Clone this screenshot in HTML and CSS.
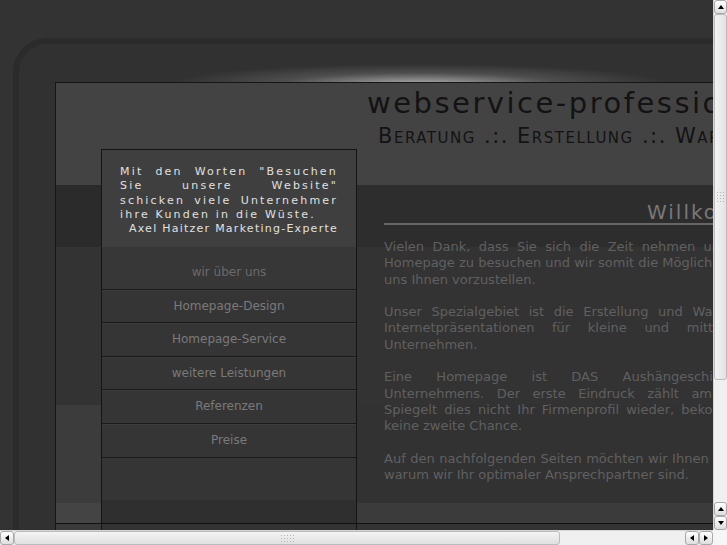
FILE: index.html
```html
<!DOCTYPE html>
<html>

<head>
    <meta charset="UTF-8">
    <link rel="stylesheet" href="styles.css">
    <title>webservice-professionell</title>
</head>

<body>
    <div class="page">
        <div class="frame">
            <div class="box">
                <div class="header">
                    <div class="logo">webservice-professionell</div>
                    <div class="slogan">Beratung .:. Erstellung .:. Wartung</div>
                </div>
                <div class="main">
                    <div class="sidebar">
                        <div class="quote">
                            <p>Mit den Worten "Besuchen Sie unsere Website" schicken viele Unternehmer ihre Kunden in die Wüste.</p>
                            <div class="author">Axel Haitzer Marketing-Experte</div>
                        </div>
                        <ul class="menu">
                            <li class="active"><a href="#">wir über uns</a></li>
                            <li><a href="#">Homepage-Design</a></li>
                            <li><a href="#">Homepage-Service</a></li>
                            <li><a href="#">weitere Leistungen</a></li>
                            <li><a href="#">Referenzen</a></li>
                            <li><a href="#">Preise</a></li>
                        </ul>
                    </div>
                    <div class="content">
                        <h1>Willkommen</h1>
                        <p>Vielen Dank, dass Sie sich die Zeit nehmen und unsere Homepage zu besuchen und wir somit die Möglichkeit haben uns Ihnen vorzustellen.</p>
                        <p>Unser Spezialgebiet ist die Erstellung und Wartung von Internetpräsentationen für kleine und mittelständige Unternehmen.</p>
                        <p>Eine Homepage ist DAS Aushängeschild Ihres Unternehmens. Der erste Eindruck zählt am meisten. Spiegelt dies nicht Ihr Firmenprofil wieder, bekommen Sie keine zweite Chance.</p>
                        <p>Auf den nachfolgenden Seiten möchten wir Ihnen aufzeigen, warum wir Ihr optimaler Ansprechpartner sind.</p>
                    </div>
                </div>
                <div class="footer">
                    <div class="footer-side"></div>
                </div>
            </div>
        </div>
    </div>

    <!-- old browser scrollbars -->
    <div class="vscroll">
        <div class="sb-btn up"></div>
        <div class="sb-thumb v"><span class="grip"></span></div>
        <div class="sb-track"></div>
        <div class="sb-btn up"></div>
        <div class="sb-btn down"></div>
    </div>
    <div class="hscroll">
        <div class="sb-btn left"></div>
        <div class="sb-thumb h"><span class="grip"></span></div>
        <div class="sb-track"></div>
        <div class="sb-btn left"></div>
        <div class="sb-btn right"></div>
    </div>
    <div class="sb-corner"></div>
</body>

</html>
```

FILE: styles.css
```css
html,
body {
    margin: 0;
    height: 100%;
    overflow: hidden;
}

body {
    background-color: #333333;
    font-family: "DejaVu Sans", Verdana, sans-serif;
}

.page {
    width: 880px;
    padding: 38px 0 0 13px;
}

.frame {
    border: 6px solid #2b2b2b;
    border-right: none;
    border-radius: 34px 0 0 0;
    padding: 38px 0 0 36px;
    background-color: #313131;
    background-image: radial-gradient(ellipse 250px 20px at 400px 40px, rgba(255, 255, 255, 0.6), rgba(255, 255, 255, 0.14) 55%, rgba(255, 255, 255, 0) 100%);
    background-repeat: no-repeat;
}

.box {
    border-top: 1px solid #161616;
    border-left: 1px solid #161616;
}

.header {
    height: 102px;
    box-sizing: border-box;
    padding: 4px 0 0 311px;
    background-color: #434343;
    color: #131313;
}

.logo {
    font-size: 29px;
    letter-spacing: 2.5px;
    line-height: 32px;
}

.slogan {
    margin-top: 4px;
    padding-left: 11px;
    font-size: 21px;
    font-variant: small-caps;
    letter-spacing: 1.5px;
    line-height: 26px;
}

.main {
    display: flex;
    height: 338px;
    padding-left: 45px;
    background:
        linear-gradient(to bottom, #2b2b2b 0 62px, #333333 62px 220px, #3c3c3c 220px 318px, #444444 318px) 0 0 / 45px 100% no-repeat,
        linear-gradient(to bottom, #2d2d2d 0 62px, #333333 62px 220px, #323232 220px 318px, #3b3b3b 318px);
}

.sidebar {
    width: 254px;
    margin-top: -36px;
    border: 1px solid #151515;
    border-bottom: none;
    background: linear-gradient(to bottom, #353535 0 350px, #2f2f2f 350px);
}

.quote {
    height: 96px;
    box-sizing: border-box;
    padding: 15px 18px 0 18px;
    background-color: #3f3f3f;
    color: #e0e0e0;
    font-size: 11px;
    line-height: 14.3px;
}

.quote p {
    margin: 0;
    text-align: justify;
    letter-spacing: 2.2px;
}

.author {
    text-align: right;
    letter-spacing: 1.25px;
}

.menu {
    list-style: none;
    margin: 0;
    padding: 0;
}

.menu li {
    height: 32.6px;
    border-bottom: 1px solid #1a1a1a;
    box-shadow: inset 0 1px 0 rgba(255, 255, 255, 0.04);
    text-align: center;
    line-height: 33px;
    font-size: 12px;
}

.menu li.active {
    padding-top: 10px;
    background-color: #373737;
}

.menu a {
    color: #7a7a7a;
    text-decoration: none;
}

.menu li.active a {
    color: #6a6a6a;
}

.content {
    width: 397px;
    margin-left: 27px;
    color: #606060;
}

.content h1 {
    margin: 16px -9px 14px 0;
    font-size: 20px;
    font-weight: normal;
    letter-spacing: 2px;
    line-height: 22px;
    text-align: right;
    color: #787878;
    border-bottom: 2px solid #666666;
}

.content p {
    margin: 0 0 16.3px;
    font-size: 13px;
    line-height: 16.3px;
    text-align: justify;
}

.footer {
    height: 40px;
    border-top: 1px solid #111111;
    padding-left: 45px;
    background: linear-gradient(to right, #3a3a3a 0 45px, #333333 45px);
}

.footer-side {
    width: 254px;
    height: 100%;
    border-left: 1px solid #151515;
    border-right: 1px solid #151515;
}

/* scrollbars */

.vscroll {
    position: fixed;
    top: 0;
    right: 0;
    width: 14px;
    height: 530px;
    display: flex;
    flex-direction: column;
    background-color: #f0f0f0;
    border-left: 1px solid #d4d4d4;
    box-sizing: border-box;
}

.hscroll {
    position: fixed;
    left: 0;
    bottom: 0;
    width: 713px;
    height: 15px;
    display: flex;
    background-color: #f0f0f0;
    border-top: 1px solid #d4d4d4;
    box-sizing: border-box;
}

.sb-corner {
    position: fixed;
    right: 0;
    bottom: 0;
    width: 14px;
    height: 15px;
    background-color: #f6f6f6;
}

.sb-track {
    flex: 1;
}

.sb-btn {
    flex: none;
    position: relative;
    box-sizing: border-box;
    border: 1px solid #a9a9a9;
    border-radius: 3px;
    background: linear-gradient(to bottom, #ffffff, #dedede);
}

.vscroll .sb-btn {
    height: 14px;
}

.hscroll .sb-btn {
    width: 14px;
}

.sb-btn::after {
    content: "";
    position: absolute;
    left: 50%;
    top: 50%;
    width: 0;
    height: 0;
    border: 3px solid transparent;
}

.sb-btn.up::after {
    border-bottom: 4px solid #000000;
    border-top: none;
    margin: -2px 0 0 -3px;
}

.sb-btn.down::after {
    border-top: 4px solid #000000;
    border-bottom: none;
    margin: -2px 0 0 -3px;
}

.sb-btn.left::after {
    border-right: 4px solid #000000;
    border-left: none;
    margin: -3px 0 0 -2px;
}

.sb-btn.right::after {
    border-left: 4px solid #000000;
    border-right: none;
    margin: -3px 0 0 -2px;
}

.sb-thumb {
    flex: none;
    display: flex;
    align-items: center;
    justify-content: center;
    box-sizing: border-box;
    border: 1px solid #bcbcbc;
    border-radius: 3px;
    background: linear-gradient(to right, #f4f4f4, #e2e2e2);
}

.sb-thumb.v {
    height: 366px;
}

.sb-thumb.h {
    width: 546px;
    background: linear-gradient(to bottom, #f4f4f4, #e0e0e0);
}

.grip {
    display: block;
    background-image: radial-gradient(circle, #b5b5b5 0.8px, transparent 1px);
    background-size: 3px 3px;
}

.sb-thumb.v .grip {
    width: 9px;
    height: 12px;
}

.sb-thumb.h .grip {
    width: 15px;
    height: 9px;
}
```
